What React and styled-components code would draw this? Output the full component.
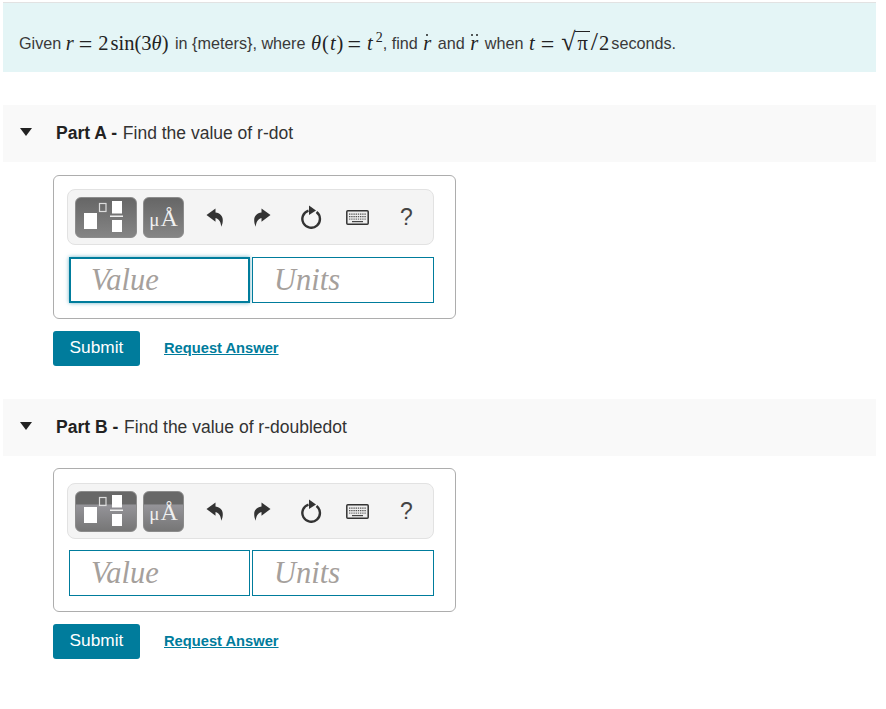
import React from 'react'
import styled, { createGlobalStyle } from 'styled-components'

const GlobalStyle = createGlobalStyle`
  html, body {
    margin: 0;
    background: #fff;
    font-family: "Liberation Sans", Arial, sans-serif;
    color: #333;
  }
`

function Undo({ flip }) {
  return (
    <svg width="18" height="19" viewBox="0 0 18 19" style={flip ? { transform: 'scaleX(-1)' } : undefined}>
      <path
        d="M0.5 7 L9.5 0.5 V4.5 C14 5 16.8 8 16.8 12 C16.8 15 16.2 17 15.2 18.7 C15 15 13.5 11 9.5 10 V13.7 Z"
        fill="#333"
      />
    </svg>
  )
}

function Redo() {
  return (
    <svg width="21" height="24" viewBox="0 0 21 24">
      <path d="M15.5 7 A8.8 8.8 0 1 1 7.5 5.6" fill="none" stroke="#333" strokeWidth="2.4" />
      <path d="M8 0.5 L15 5.5 L8 10 Z" fill="#333" />
    </svg>
  )
}

function Keyboard() {
  return (
    <svg width="23" height="15" viewBox="0 0 23 15">
      <rect x="0.8" y="0.8" width="21.4" height="13.4" rx="1" fill="#eee" stroke="#333" strokeWidth="1.5" />
      <path d="M3 4.2 H20 M3 6.7 H20" stroke="#555" strokeWidth="1.3" strokeDasharray="1.4 0.8" />
      <path d="M3 9.2 H20" stroke="#777" strokeWidth="1.2" strokeDasharray="1.4 0.8" />
      <path d="M6 11.6 H17" stroke="#444" strokeWidth="1.2" />
    </svg>
  )
}

function Templates() {
  return (
    <TemplateGlyph width="60" height="39" viewBox="0 0 60 39">
      <rect x="8" y="15" width="13" height="16" fill="#fff" />
      <rect x="23.5" y="5.5" width="6.5" height="8" fill="none" stroke="#ddd" strokeWidth="1.2" />
      <rect x="36" y="3" width="10" height="12.5" fill="#fff" />
      <rect x="34" y="17.5" width="13" height="1.5" fill="#eee" />
      <rect x="36" y="22" width="10" height="12" fill="#fff" />
    </TemplateGlyph>
  )
}

function MathInput({ focused }) {
  return (
    <Card $focused={focused}>
      <Toolbar>
        <ToolButton $w={62} $banded={!focused}>
          <Templates />
        </ToolButton>
        <ToolButton $w={41} $banded={!focused}>
          <SymbolText><small>μ</small>Å</SymbolText>
        </ToolButton>
        <Icons>
          <IconSlot $w={22}><Undo /></IconSlot>
          <IconSlot $w={22} $ml={25}><Undo flip /></IconSlot>
          <IconSlot $w={22} $ml={27}><Redo /></IconSlot>
          <IconSlot $w={24} $ml={23}><Keyboard /></IconSlot>
          <Help>?</Help>
        </Icons>
      </Toolbar>
      <Inputs $focused={focused}>
        <Field placeholder="Value" aria-label="Value" $focused={focused} />
        <Field placeholder="Units" aria-label="Units" />
      </Inputs>
    </Card>
  )
}

function Part({ letter, title, focused }) {
  return (
    <section>
      <PartHeader>
        <Caret />
        <PartTitle>
          <b>Part {letter} - </b>
          {title}
        </PartTitle>
      </PartHeader>
      <PartBody $focused={focused}>
        <MathInput focused={focused} />
        <Actions>
          <SubmitButton>Submit</SubmitButton>
          <RequestLink href="#">Request Answer</RequestLink>
        </Actions>
      </PartBody>
    </section>
  )
}

export default function App() {
  return (
    <Page>
      <GlobalStyle />
      <Banner>
        <span>Given </span>
        <M><i>r</i></M>
        <Eq $ml={5}>=</Eq>
        <M $ml={6}>2</M>
        <M $ml={2}>sin(3<i>θ</i>)</M>
        <Words $ml={2}> in {'{meters}'}, where </Words>
        <M $ml={1} $ls={1}><i>θ</i>(<i>t</i>)</M>
        <Eq $ml={3}>=</Eq>
        <M $ml={6}><i>t</i><Sup>2</Sup></M>
        <Words>, find </Words>
        <M $ml={1}><Accent><i>r</i></Accent></M>
        <Words $ml={2}> and </Words>
        <M $ml={1}><Accent $double><i>r</i></Accent></M>
        <Words $ml={2}> when </Words>
        <M $ml={1}><i>t</i></M>
        <Eq $ml={6}>=</Eq>
        <M $ml={7}><Radical>√</Radical><Over>π</Over><Slash>/</Slash>2</M>
        <Words $ml={2}>seconds.</Words>
      </Banner>
      <Parts>
        <Part letter="A" title="Find the value of r-dot" focused />
        <Part letter="B" title="Find the value of r-doubledot" />
      </Parts>
    </Page>
  )
}

const Page = styled.div`
  width: 873px;
  padding: 3px 0 0 3px;
`

const Banner = styled.div`
  height: 69px;
  box-sizing: border-box;
  box-shadow: 0 -1px 0 #e2e2e2;
  background: #e4f5f6;
  display: flex;
  align-items: center;
  padding: 12px 0 0 16px;
  font-size: 16.2px;
  white-space: pre;
  color: #3a3a3a;
`

const Words = styled.span`
  margin-left: ${p => p.$ml || 0}px;
`

const M = styled.span`
  font-family: "Liberation Serif", "Times New Roman", serif;
  font-size: 20.5px;
  color: #222;
  letter-spacing: ${p => p.$ls || 0}px;
  margin-left: ${p => p.$ml || 0}px;
`

const Eq = styled(M)`
  font-size: 24px;
  line-height: 1;
`

const Sup = styled.sup`
  font-size: 14px;
  line-height: 0;
  margin-left: 3px;
`

const Accent = styled.span`
  position: relative;
  display: inline-block;

  &::before {
    content: '';
    position: absolute;
    top: 2px;
    left: ${p => (p.$double ? 1 : 3)}px;
    width: 2px;
    height: 2px;
    border-radius: 50%;
    background: #222;
    box-shadow: ${p => (p.$double ? '5px 0 0 #222' : 'none')};
  }
`

const Radical = styled.span`
  font-size: 26px;
  line-height: 0;
`

const Over = styled.span`
  border-top: 1px solid #222;
  padding: 0 2px;
`

const Slash = styled.span`
  font-size: 26px;
  line-height: 0;
  margin: 0 1px;
`

const Parts = styled.div`
  display: flex;
  flex-direction: column;
  gap: 33px;
  margin-top: 33px;
`

const PartHeader = styled.div`
  height: 56.5px;
  background: #f9f9f9;
  display: flex;
  align-items: center;
  padding-left: 17px;
`

const Caret = styled.span`
  width: 0;
  height: 0;
  border-left: 6.5px solid transparent;
  border-right: 6.5px solid transparent;
  border-top: 8px solid #222;
  margin-right: 24px;
  margin-top: -2px;
`

const PartTitle = styled.div`
  font-size: 17.5px;
  color: #333;

  b {
    color: #222;
    font-weight: 700;
    margin-right: 1px;
  }
`

const PartBody = styled.div`
  padding: ${p => (p.$focused ? 13.5 : 12.5)}px 0 0 50px;
`

const Card = styled.div`
  width: 403px;
  height: 144px;
  box-sizing: border-box;
  border: 1px solid #adadad;
  border-radius: 6px;
  padding: ${p => (p.$focused ? 13 : 14)}px 21px 0 13px;
`

const Toolbar = styled.div`
  height: 56px;
  box-sizing: border-box;
  border: 1px solid #e2e2e2;
  border-radius: 8px;
  background: #f4f4f4;
  display: flex;
  align-items: center;
  padding-left: 7px;
  gap: 6px;
`

const ToolButton = styled.div`
  width: ${p => p.$w}px;
  height: 41px;
  border-radius: 6px;
  background: ${p =>
    p.$banded
      ? 'linear-gradient(#686868 0, #686868 31%, #959499 33%, #767676 100%)'
      : 'linear-gradient(#666, #858585)'};
  border: 1px solid #8c8c8c;
  box-sizing: border-box;
  display: flex;
  align-items: center;
  justify-content: center;
`

const TemplateGlyph = styled.svg`
  display: block;
`

const SymbolText = styled.span`
  font-family: "Liberation Serif", serif;
  font-size: 24px;
  color: #f0f0f0;
  margin-top: 3px;

  small {
    font-size: 19px;
    margin-right: 1px;
  }
`

const Icons = styled.div`
  display: flex;
  align-items: center;
  margin-left: 14px;
`

const IconSlot = styled.span`
  width: ${p => p.$w}px;
  margin-left: ${p => p.$ml || 0}px;
  display: flex;
  justify-content: center;
`

const Help = styled.span`
  font-size: 23px;
  color: #444;
  margin-left: 31px;
`

const Inputs = styled.div`
  display: grid;
  grid-template-columns: 181px 182px;
  gap: 2px;
  margin: ${p => (p.$focused ? 12 : 11)}px 0 0 2px;
`

const Field = styled.input`
  min-width: 0;
  height: 46px;
  box-sizing: border-box;
  border: ${p => (p.$focused ? 2 : 1)}px solid #007c9c;
  border-radius: 0;
  outline: none;
  padding: 1px 0 0 ${p => (p.$focused ? 20 : 21)}px;
  font-family: "Liberation Serif", serif;
  font-style: italic;
  font-size: 30.5px;
  box-shadow: ${p => (p.$focused ? '0 0 4px rgba(0, 124, 156, 0.6)' : 'none')};

  &::placeholder {
    color: #a5a09c;
    opacity: 1;
  }
`

const Actions = styled.div`
  display: flex;
  align-items: center;
  gap: 24px;
  margin-top: 12px;
`

const SubmitButton = styled.button`
  width: 87px;
  height: 35px;
  border: none;
  border-radius: 3px;
  background: #007c9c;
  color: #fff;
  font-family: "Liberation Sans", sans-serif;
  font-size: 17.3px;
  padding: 0 0 2px;
`

const RequestLink = styled.a`
  color: #007c9c;
  font-size: 14.7px;
  font-weight: 700;
  text-decoration: underline;
  margin-bottom: 2px;
`
